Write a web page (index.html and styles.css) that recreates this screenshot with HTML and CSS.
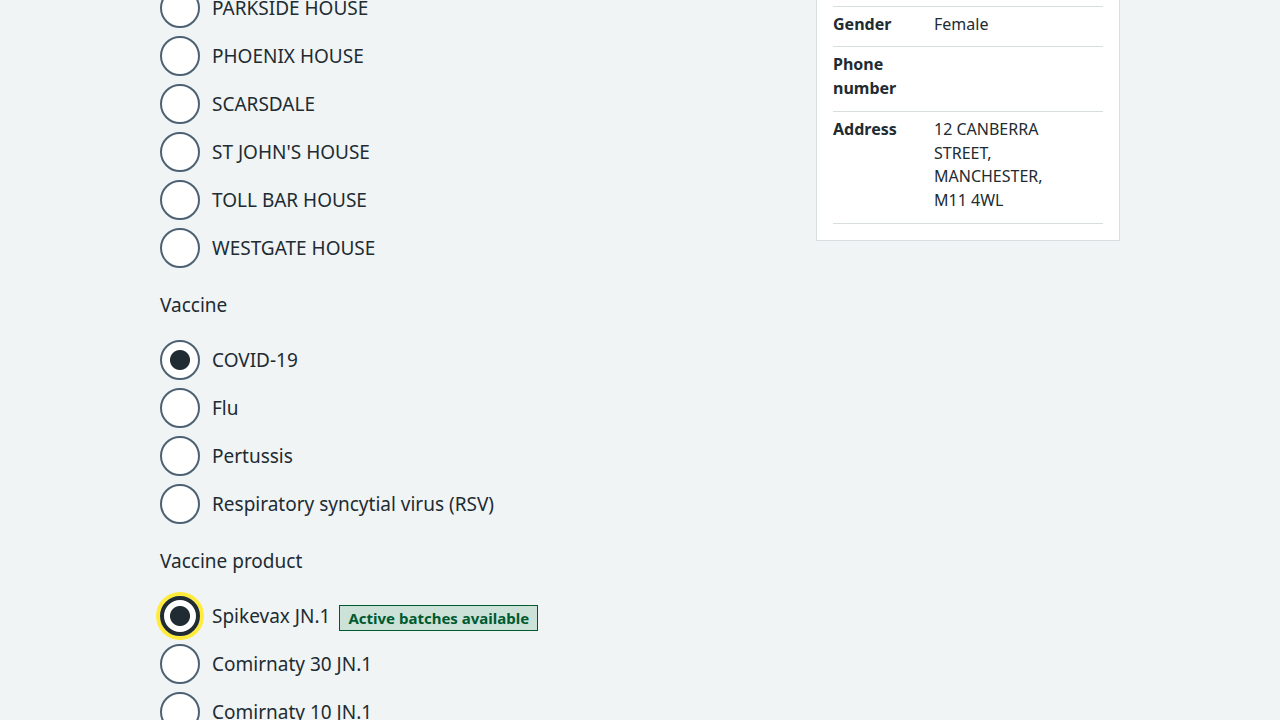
FILE: index.html
```html
<!DOCTYPE html>
<html lang="en">
<head>
<meta charset="utf-8">
<title>Record vaccination</title>
<link rel="stylesheet" href="styles.css">
</head>
<body>
<div class="page">
  <main class="form-col">
    <div class="radios">
      <label class="radio"><span class="radio-input"></span><span class="radio-label">PARKSIDE HOUSE</span></label>
      <label class="radio"><span class="radio-input"></span><span class="radio-label">PHOENIX HOUSE</span></label>
      <label class="radio"><span class="radio-input"></span><span class="radio-label">SCARSDALE</span></label>
      <label class="radio"><span class="radio-input"></span><span class="radio-label">ST JOHN'S HOUSE</span></label>
      <label class="radio"><span class="radio-input"></span><span class="radio-label">TOLL BAR HOUSE</span></label>
      <label class="radio"><span class="radio-input"></span><span class="radio-label">WESTGATE HOUSE</span></label>
    </div>

    <fieldset class="group">
      <legend class="legend">Vaccine</legend>
      <div class="radios">
        <label class="radio"><span class="radio-input checked"></span><span class="radio-label">COVID-19</span></label>
        <label class="radio"><span class="radio-input"></span><span class="radio-label">Flu</span></label>
        <label class="radio"><span class="radio-input"></span><span class="radio-label">Pertussis</span></label>
        <label class="radio"><span class="radio-input"></span><span class="radio-label">Respiratory syncytial virus (RSV)</span></label>
      </div>
    </fieldset>

    <fieldset class="group">
      <legend class="legend">Vaccine product</legend>
      <div class="radios">
        <label class="radio"><span class="radio-input checked focused"></span><span class="radio-label">Spikevax JN.1</span><strong class="tag">Active batches available</strong></label>
        <label class="radio"><span class="radio-input"></span><span class="radio-label">Comirnaty 30 JN.1</span></label>
        <label class="radio"><span class="radio-input"></span><span class="radio-label">Comirnaty 10 JN.1</span></label>
      </div>
    </fieldset>
  </main>

  <aside class="side-col">
    <div class="card">
      <dl class="summary">
        <div class="row"><dt>Name</dt><dd>Jane Smith</dd></div>
        <div class="row"><dt>Gender</dt><dd>Female</dd></div>
        <div class="row"><dt>Phone number</dt><dd></dd></div>
        <div class="row"><dt>Address</dt><dd>12 CANBERRA<br>STREET,<br>MANCHESTER,<br>M11 4WL</dd></div>
      </dl>
    </div>
  </aside>
</div>
</body>
</html>
```

FILE: styles.css
```css
html, body {
  margin: 0;
  padding: 0;
  background: #f0f4f5;
  color: #212b32;
  font-family: "Noto Sans", "Liberation Sans", sans-serif;
  overflow: hidden;
}

.page {
  width: 960px;
  margin: -12px auto 0;
  display: flex;
  align-items: flex-start;
  justify-content: space-between;
}

.form-col {
  width: 620px;
}

.radios {
  display: flex;
  flex-direction: column;
  gap: 8px;
}

.radio {
  display: flex;
  align-items: center;
  min-height: 40px;
  font-size: 19px;
  line-height: 28px;
}

.radio-input {
  flex: none;
  box-sizing: border-box;
  width: 40px;
  height: 40px;
  border: 2px solid #4c6272;
  border-radius: 50%;
  background: #ffffff;
}

.radio-input.checked {
  background: radial-gradient(circle, #212b32 0 9.5px, #ffffff 10.5px);
}

.radio-input.focused {
  border: 4px solid #212b32;
  box-shadow: 0 0 0 4px #ffeb3b;
}

.radio-label {
  padding: 0 5px 0 12px;
}

.tag {
  display: inline-block;
  font-size: 15px;
  line-height: 24px;
  font-weight: 700;
  color: #005a30;
  background: #cce2d8;
  border: 1px solid #005a30;
  padding: 0 8px;
  margin-top: 3px;
  margin-left: 4px;
}

.group {
  border: 0;
  margin: 24px 0 0;
  padding: 0;
  min-width: 0;
}

.legend {
  padding: 0;
  font-size: 19px;
  line-height: 28px;
  margin-bottom: 20px;
  position: relative;
  top: -1px;
}

.side-col {
  width: 304px;
  margin-top: -39px;
}

.card {
  background: #ffffff;
  border: 1px solid #d8dde0;
  padding: 16px 16px 16px;
}

.summary {
  margin: 0;
  font-size: 16px;
  line-height: 23.7px;
}

.row {
  display: flex;
  border-bottom: 1px solid #d8dde0;
}

.row dt {
  width: 85px;
  padding: 6px 16px 10px 0;
  font-weight: 700;
}

.row dd {
  margin: 0;
  padding: 6px 0 10px;
  flex: 1;
}
```
